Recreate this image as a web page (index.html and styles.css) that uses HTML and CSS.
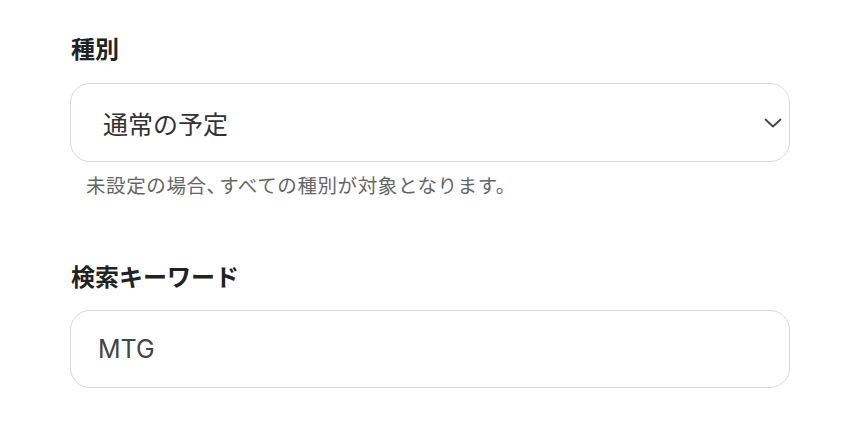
FILE: index.html
```html
<!DOCTYPE html>
<html lang="ja">
<head>
<meta charset="utf-8">
<link rel="stylesheet" href="styles.css">
</head>
<body>
<div class="form">
  <div class="field">
    <div class="label">種別</div>
    <div class="box select">
      <span class="value sel">通常の予定</span>
      <svg class="chev" width="18" height="10" viewBox="0 0 18 10"><path d="M1.5 1.5 L9 8.5 L16.5 1.5" fill="none" stroke="#444" stroke-width="1.8" stroke-linecap="round" stroke-linejoin="round"/></svg>
    </div>
    <div class="help">未設定の場合<span class="comma">、</span>すべての種別が対象となります。</div>
  </div>
  <div class="field second">
    <div class="label">検索キーワード</div>
    <div class="box">
      <span class="value inp">MTG</span>
    </div>
  </div>
</div>
</body>
</html>
```
FILE: styles.css
```css
html, body { margin: 0; padding: 0; background: #fff; }
body { font-family: "Noto Sans CJK JP", "Noto Sans", sans-serif; color: #222; }
.form { padding: 32px 76px 0 70px; }
.field { display: flex; flex-direction: column; }
.second { margin-top: 62px; }
.label { font-size: 24px; font-weight: 700; line-height: 32px; margin-left: 1px; color: #222; }
.box { margin-top: 19px; height: 77px; border: 1px solid #d8d8e2; border-radius: 20px; display: flex; align-items: center; justify-content: space-between; }
.second .box { margin-top: 18px; height: 76px; }
.value { font-size: 25px; color: #333; line-height: 32px; }
.sel { margin-left: 32px; }
.inp { margin-left: 27px; font-family: Inter, "Noto Sans", sans-serif; color: #444; }
.chev { margin-right: 7px; }
.help { margin-top: 10px; margin-left: 16px; font-size: 19.5px; color: #666; line-height: 26px; letter-spacing: 0.6px; }
.comma { letter-spacing: -7px; }
```
